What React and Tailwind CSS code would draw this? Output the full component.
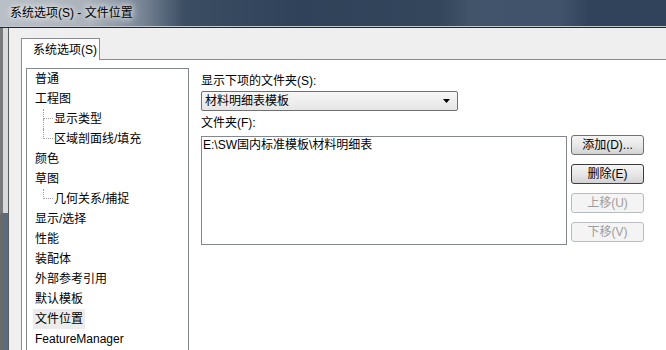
import React from "react";

const treeItems = [
  { label: "普通" },
  { label: "工程图" },
  { label: "显示类型", child: true },
  { label: "区域剖面线/填充", child: true, last: true },
  { label: "颜色" },
  { label: "草图" },
  { label: "几何关系/捕捉", child: true, last: true },
  { label: "显示/选择" },
  { label: "性能" },
  { label: "装配体" },
  { label: "外部参考引用" },
  { label: "默认模板" },
  { label: "文件位置", selected: true },
  { label: "FeatureManager" },
];

function TreeRow({ item }) {
  if (item.child) {
    return (
      <div className="flex h-[20px] items-stretch pl-[14px]">
        {/* dotted connector */}
        <div className="flex w-[10px] flex-col">
          <div className="h-[10px] border-l border-b border-dotted border-[#a0a0a0]"></div>
          {!item.last && <div className="flex-1 border-l border-dotted border-[#a0a0a0]"></div>}
        </div>
        <span className="ml-[1px] leading-[20px]">{item.label}</span>
      </div>
    );
  }
  return (
    <div className="flex h-[20px] items-center pl-[4px]">
      <span className={`px-[2px] leading-[20px] ${item.selected ? "bg-[#ececec]" : ""}`}>{item.label}</span>
    </div>
  );
}

function Button({ children, disabled, focused }) {
  return (
    <div
      className={`flex h-[20px] w-[73px] items-center justify-center rounded-[3px] border ${
        disabled
          ? "border-[#b8bcbf] bg-[#f4f4f4] text-[#9d9d9d]"
          : focused
          ? "border-[#3d3d3d] bg-gradient-to-b from-[#f4f4f4] via-[#e8e8e8] to-[#d3d3d3] text-black"
          : "border-[#707070] bg-gradient-to-b from-[#f4f4f4] via-[#e8e8e8] to-[#d3d3d3] text-black"
      }`}
    >
      {children}
    </div>
  );
}

export default function App() {
  return (
    <div
      className="flex h-[350px] w-[666px] flex-col overflow-hidden bg-[#efefef] text-[12px] text-black"
      style={{ fontFamily: '"Liberation Sans", "Noto Sans CJK SC", sans-serif' }}
    >
      {/* Title bar */}
      <div className="flex h-[26px] shrink-0 items-center bg-[linear-gradient(90deg,#b9bfc6_0px,#aab1ba_90px,#7a8797_140px,#3b4d63_185px,#2f4259_300px,#33465c_440px,#41546a_470px,#40536a_560px,#30435a_590px,#30435a_666px)] pl-[10px]">
        <span className="[text-shadow:0_0_6px_#ffffff,0_0_10px_#ffffff]">系统选项(S) - 文件位置</span>
      </div>
      <div className="h-[1px] shrink-0 bg-[#c3cad2]"></div>
      <div className="h-[1px] shrink-0 bg-[#1d2530]"></div>

      {/* Body */}
      <div className="flex min-h-0 flex-1 overflow-hidden">
        {/* window frame edge */}
        <div className="flex w-[8px] shrink-0 flex-col">
          <div className="flex h-[185px] shrink-0">
            <div className="w-[3px] bg-[#7a7a7a]"></div>
            <div className="flex-1 bg-[#d7dadd]"></div>
          </div>
          <div className="flex flex-1">
            <div className="w-[3px] bg-[#6a6a6a]"></div>
            <div className="flex-1 bg-[#5a6b80]"></div>
          </div>
        </div>
        <div className="w-[1px] shrink-0 bg-[#5c5c5c]"></div>

        {/* Dialog */}
        <div className="flex min-h-0 flex-1 flex-col pl-[12px] pt-[10px]">
          {/* Tabs */}
          <div className="flex shrink-0">
            <div className="relative z-10 -mb-px flex h-[22px] w-[79px] items-center border border-b-0 border-[#898c95] bg-white pl-[11px]">
              系统选项(S)
            </div>
          </div>

          {/* Tab panel */}
          <div className="flex min-h-[300px] flex-1 items-start border-l border-t border-[#898c95] bg-white pl-[4px] pt-[8px]">
            {/* Tree */}
            <div className="h-[340px] w-[163px] shrink-0 border border-b-0 border-[#828790] bg-white pl-[2px]">
              {treeItems.map((item, i) => (
                <TreeRow key={i} item={item} />
              ))}
            </div>

            {/* Right pane */}
            <div className="ml-[12px] flex shrink-0 flex-col pt-[5px]">
              <div className="h-[16px] leading-[16px]">显示下项的文件夹(S):</div>
              <div className="mt-[2px] flex h-[20px] w-[257px] items-center justify-between rounded-[2px] border border-[#707070] bg-gradient-to-b from-[#f6f6f6] to-[#e6e6e6] pl-[3px] pr-[7px]">
                <span>材料明细表模板</span>
                <svg width="7" height="4" viewBox="0 0 7 4">
                  <polygon points="0,0 7,0 3.5,4" fill="#000" />
                </svg>
              </div>
              <div className="mt-[4px] h-[16px] leading-[16px]">文件夹(F):</div>
              <div className="mt-[4px] flex items-start">
                <div className="mt-[1px] h-[109px] w-[366px] border border-[#828790] bg-white pl-[1px] pt-[1px] leading-[14px]">
                  E:\SW国内标准模板\材料明细表
                </div>
                <div className="ml-[4px] flex flex-col gap-[9px]">
                  <Button>添加(D)...</Button>
                  <Button focused>删除(E)</Button>
                  <Button disabled>上移(U)</Button>
                  <Button disabled>下移(V)</Button>
                </div>
              </div>
            </div>
          </div>
        </div>
      </div>
    </div>
  );
}
